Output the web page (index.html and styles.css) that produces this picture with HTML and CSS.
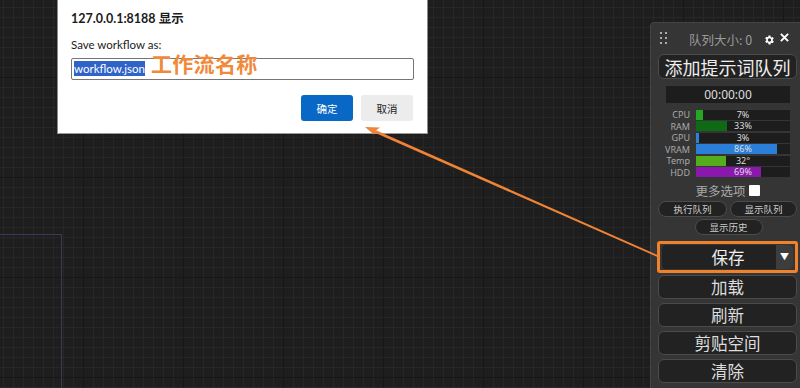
FILE: index.html
```html
<!DOCTYPE html>
<html lang="zh">
<head>
<meta charset="utf-8">
<title>ComfyUI</title>
<link rel="stylesheet" href="styles.css">
</head>
<body>
<div class="canvas">
  <div class="node-outline"></div>

  <div class="dialog">
    <div class="dlg-title">127.0.0.1:8188 显示</div>
    <div class="dlg-msg">Save workflow as:</div>
    <div class="dlg-input"><span class="sel">workflow.json</span></div>
    <div class="dlg-actions">
      <button class="btn-ok">确定</button>
      <button class="btn-cancel">取消</button>
    </div>
  </div>

  <div class="annot">工作流名称</div>

  <div class="menu">
    <div class="menu-head">
      <div class="drag">
        <i></i><i></i><i></i><i></i><i></i><i></i>
      </div>
      <span class="qsize">队列大小: 0</span>
      <svg class="gear" width="12" height="12" viewBox="0 0 24 24"><path fill="#fff" d="M19.4 13a7.5 7.5 0 0 0 0-2l2.1-1.6-2-3.5-2.5 1a7.6 7.6 0 0 0-1.7-1L15 3h-4l-.4 2.6a7.6 7.6 0 0 0-1.7 1l-2.5-1-2 3.5L6.6 11a7.5 7.5 0 0 0 0 2l-2.2 1.6 2 3.5 2.5-1a7.6 7.6 0 0 0 1.7 1L11 21h4l.4-2.6a7.6 7.6 0 0 0 1.7-1l2.5 1 2-3.5zM13 15.5a3.5 3.5 0 1 1 0-7 3.5 3.5 0 0 1 0 7z"/></svg>
      <svg class="close" width="9" height="9" viewBox="0 0 10 10"><path d="M1 1L9 9M9 1L1 9" stroke="#fff" stroke-width="2.2"/></svg>
    </div>
    <button class="big-btn queue">添加提示词队列</button>
    <div class="timer">00:00:00</div>
    <div class="stats">
      <span class="lbl">CPU</span><div class="bar"><div class="fill" style="width:7%;background:#23a823"></div><span>7%</span></div>
      <span class="lbl">RAM</span><div class="bar"><div class="fill" style="width:33%;background:#0f6a15"></div><span>33%</span></div>
      <span class="lbl">GPU</span><div class="bar"><div class="fill" style="width:3%;background:#2b82d9"></div><span>3%</span></div>
      <span class="lbl">VRAM</span><div class="bar"><div class="fill" style="width:86%;background:#2b7fd8"></div><span>86%</span></div>
      <span class="lbl">Temp</span><div class="bar"><div class="fill" style="width:32%;background:#55ad1c"></div><span>32°</span></div>
      <span class="lbl">HDD</span><div class="bar"><div class="fill" style="width:69%;background:#8a18ad"></div><span>69%</span></div>
    </div>
    <div class="more">更多选项<span class="check"></span></div>
    <div class="pill-row">
      <button class="pill">执行队列</button>
      <button class="pill">显示队列</button>
    </div>
    <div class="pill-row center">
      <button class="pill hist">显示历史</button>
    </div>
    <div class="save-wrap">
      <div class="save-btn"><span class="save-label">保存</span><span class="drop">▼</span></div>
    </div>
    <button class="big-btn">加载</button>
    <button class="big-btn">刷新</button>
    <button class="big-btn">剪贴空间</button>
    <button class="big-btn">清除</button>
  </div>

  <svg class="arrow" width="800" height="388" viewBox="0 0 800 388">
    <polygon fill="#ef8436" points="658,255.2 658,257.2 372,131.6 373.2,128.9"/>
    <polygon fill="#ef8436" points="365,127 380,127.5 376,130.3 374,134.5"/>
  </svg>
</div>
</body>
</html>
```

FILE: styles.css
```css
* { box-sizing: border-box; }
html, body { margin: 0; padding: 0; }
body {
  width: 800px;
  height: 388px;
  overflow: hidden;
  font-family: "Noto Sans", "Noto Sans CJK SC", sans-serif;
}
.canvas {
  position: relative;
  width: 800px;
  height: 388px;
  background-color: #1e1e1e;
  background-image:
    linear-gradient(90deg, #171717 1px, transparent 1px),
    linear-gradient(#171717 1px, transparent 1px),
    linear-gradient(90deg, #272727 1px, transparent 1px),
    linear-gradient(#272727 1px, transparent 1px);
  background-size: 100px 100px, 100px 100px, 10px 10px, 10px 10px;
  background-position: 83px 0, 0 77px, 3px 0, 0 7px;
}
.node-outline {
  position: absolute;
  left: -2px;
  top: 234px;
  width: 64px;
  height: 170px;
  border-top: 1px solid #363b57;
  border-right: 1px solid #363b57;
}

/* dialog */
.dialog {
  position: absolute;
  left: 57px;
  top: 0;
  width: 371px;
  height: 134px;
  background: #fff;
  border-left: 1px solid #8a8a8a;
  border-right: 1px solid #8a8a8a;
  border-bottom: 1px solid #9a9a9a;
  padding: 11px 14px 0 13px;
  color: #1b1b1b;
}
.dlg-title {
  font-family: "Lato", "Noto Sans CJK SC", sans-serif;
  font-weight: 700;
  font-size: 12.5px;
  line-height: 16px;
}
.dlg-msg {
  font-family: "Lato", sans-serif;
  font-size: 11.5px;
  line-height: 16px;
  margin-top: 10px;
}
.dlg-input {
  margin-top: 5px;
  height: 22px;
  width: 343px;
  border: 1px solid #767676;
  border-radius: 2px;
  padding: 2px 2px;
  font-family: "Lato", sans-serif;
  font-size: 11.5px;
  line-height: 16px;
}
.sel {
  background: #2f63c8;
  color: #fff;
  padding: 1px 0;
}
.dlg-actions {
  display: flex;
  justify-content: flex-end;
  gap: 8px;
  margin-top: 15px;
}
.dlg-actions button {
  width: 52px;
  height: 26px;
  border: 0;
  border-radius: 3px;
  font-family: "Noto Sans CJK SC", sans-serif;
  font-size: 10.5px;
}
.btn-ok { background: #0967c6; color: #fff; }
.btn-cancel { background: #ececec; color: #222; }

.annot {
  position: absolute;
  left: 151px;
  top: 49px;
  font-family: "Noto Sans CJK SC", sans-serif;
  font-weight: 700;
  font-size: 21px;
  line-height: 28px;
  color: #ef8a3a;
  letter-spacing: 0.3px;
}

/* menu */
.menu {
  position: absolute;
  left: 650px;
  top: 22px;
  width: 152px;
  height: 380px;
  background: #353535;
  border: 1px solid #444;
  border-radius: 4px 0 0 0;
  padding: 0 4px 0 7px;
  display: flex;
  flex-direction: column;
  font-family: "Noto Sans CJK SC", sans-serif;
  color: #ddd;
}
.menu-head {
  height: 31px;
  display: flex;
  align-items: center;
  position: relative;
}
.drag {
  display: grid;
  grid-template-columns: 2px 2px;
  gap: 3px 3px;
  margin-left: 2px;
  margin-top: -2px;
}
.drag i { width: 2px; height: 2px; background: #aaa; display: block; }
.qsize {
  color: #9a9a9a;
  font-size: 12.5px;
  margin-left: 22px;
  margin-top: 2px;
}
.gear { margin-left: 11px; margin-top: 2px; }
.close { margin-left: 5px; margin-top: -3px; }
.big-btn {
  display: block;
  width: 139px;
  height: 24px;
  margin: 0 0 4px 0;
  padding: 0;
  background: #222;
  color: #ddd;
  border: 1px solid #4b4b4b;
  border-radius: 6px;
  font-family: "Noto Sans CJK SC", sans-serif;
  font-size: 16.5px;
  line-height: 20px;
}
.queue { height: 25px; font-size: 18px; color: #eee; margin-bottom: 7px; }
.timer {
  width: 124px;
  height: 17px;
  margin-left: 8px;
  background: #1d1d1d;
  color: #ddd;
  font-size: 12px;
  line-height: 17px;
  text-align: center;
  font-family: "Noto Sans", sans-serif;
}
.stats {
  display: grid;
  grid-template-columns: 30px 94px;
  column-gap: 6px;
  grid-auto-rows: 11.5px;
  margin-top: 6px;
  margin-left: 2px;
  font-family: "Noto Sans", sans-serif;
  font-size: 9px;
}
.lbl {
  text-align: right;
  color: #a9a9a9;
  line-height: 11px;
}
.bar {
  position: relative;
  height: 10px;
  margin-top: 0.5px;
  background: #1d1d1d;
}
.fill { height: 100%; }
.bar span {
  position: absolute;
  left: 0; right: 0; top: 0;
  text-align: center;
  line-height: 10px;
  color: #ddd;
}
.more {
  display: flex;
  align-items: center;
  justify-content: center;
  gap: 3px;
  color: #a9a9a9;
  font-size: 12.5px;
  height: 19px;
  margin-top: 3px;
  padding-left: 0;
}
.check {
  width: 11px;
  height: 11px;
  background: #fff;
  border-radius: 1px;
}
.pill-row {
  display: flex;
  gap: 3px;
  margin-top: 1px;
}
.pill-row.center { justify-content: center; margin-top: 2px; padding-left: 2px; }
.pill {
  width: 69px;
  height: 16px;
  padding: 0;
  background: #222;
  color: #ccc;
  border: 1px solid #4b4b4b;
  border-radius: 8px;
  font-family: "Noto Sans CJK SC", sans-serif;
  font-size: 9.5px;
  line-height: 13px;
}
.pill + .pill { width: 67px; }
.hist { width: 68px; }
.save-wrap {
  margin: 6px 0 2px -1px;
  width: 141px;
  height: 32px;
  border: 3px solid #f0822c;
  border-radius: 3px;
  padding: 1px 2px;
}
.save-btn {
  height: 24px;
  background: #222;
  border-radius: 4px;
  display: flex;
  overflow: hidden;
}
.save-label {
  flex: 1;
  text-align: center;
  color: #eee;
  font-size: 16.5px;
  line-height: 24px;
  padding-left: 18px;
}
.drop {
  width: 17px;
  background: #3d3d3d;
  color: #fff;
  font-size: 9px;
  line-height: 24px;
  text-align: center;
}
.arrow {
  position: absolute;
  left: 0;
  top: 0;
  pointer-events: none;
}
```
